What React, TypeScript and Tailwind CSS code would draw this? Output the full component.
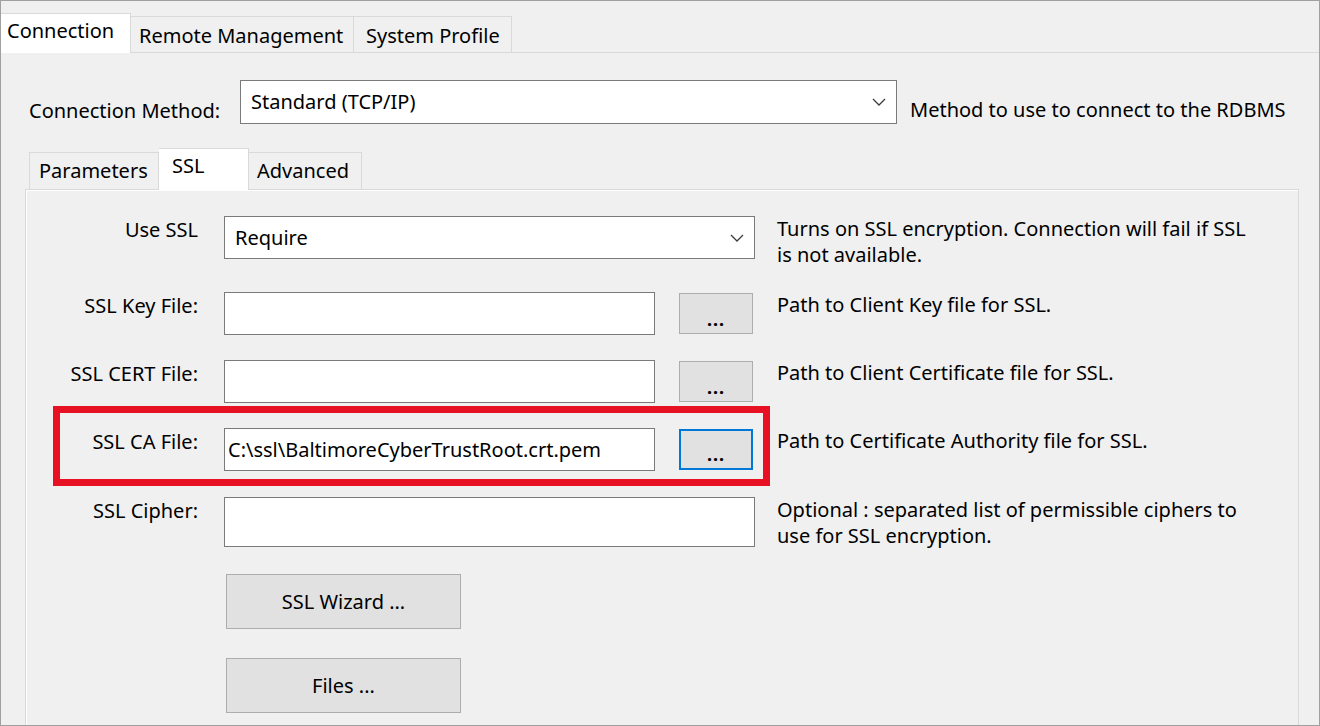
import React from "react";

const font = { fontFamily: '"Noto Sans", "Segoe UI", sans-serif' };

function Chevron() {
  return (
    <svg width="14" height="8" viewBox="0 0 14 8" className="text-[#3c3c3c]">
      <polyline points="1,1 7,7 13,1" fill="none" stroke="currentColor" strokeWidth="1.3" />
    </svg>
  );
}

function Combo({ value, className }: { value: string; className: string }) {
  return (
    <div
      className={`flex items-center justify-between border border-[#7a7a7a] bg-white pl-[10px] pr-[10px] ${className}`}
    >
      <span>{value}</span>
      <Chevron />
    </div>
  );
}

function TextBox({ value }: { value?: string }) {
  return (
    <div className="flex h-[43px] w-[431px] items-center border border-[#7a7a7a] bg-white pl-[3px]">
      {value}
    </div>
  );
}

function DotsButton({ active }: { active?: boolean }) {
  return (
    <div
      className={`ml-[24px] mt-[1px] flex h-[41px] w-[74px] items-end justify-center bg-[#e1e1e1] pb-[5px] text-[18px] font-bold leading-none tracking-[1px] ${
        active ? "border-2 border-[#0078d7]" : "border border-[#adadad]"
      }`}
    >
      ...
    </div>
  );
}

function Row({
  label,
  children,
  desc,
  className = "",
}: {
  label: string;
  children: React.ReactNode;
  desc?: React.ReactNode;
  className?: string;
}) {
  return (
    <div className={`flex items-start ${className}`}>
      <div className="w-[172px] pt-[1px] text-right leading-[26px]">{label}</div>
      <div className="ml-[26px] flex w-[531px] items-start">{children}</div>
      {desc && <div className="ml-[22px] leading-[26px]">{desc}</div>}
    </div>
  );
}

export default function App() {
  return (
    <div
      className="flex h-[726px] w-[1320px] flex-col overflow-hidden border border-[#a0a0a0] bg-[#f0f0f0] text-[20px] text-black"
      style={font}
    >
      {/* Outer tabs */}
      <div className="flex h-[51px] items-end">
        <div className="relative z-10 -mb-px flex h-[40px] w-[130px] items-start border-r border-t border-[#d9d9d9] bg-white pl-[6px] pt-[2px]">
          Connection
        </div>
        <div className="flex h-[36px] w-[223px] items-start border-r border-t border-[#d9d9d9] pl-[8px] pt-[4px]">
          Remote Management
        </div>
        <div className="flex h-[36px] w-[158px] items-start border-r border-t border-[#d9d9d9] pl-[12px] pt-[4px]">
          System Profile
        </div>
      </div>

      {/* Outer panel */}
      <div className="flex flex-1 flex-col border-t border-[#d9d9d9] bg-[#f0f0f0] pr-[20px]">
        <div className="flex h-[71px] items-start pl-[28px] pt-[27px]">
          <div className="w-[211px] pt-[16px]">Connection Method:</div>
          <Combo value="Standard (TCP/IP)" className="h-[44px] w-[657px]" />
          <div className="ml-[13px] pt-[15px]">Method to use to connect to the RDBMS</div>
        </div>

        {/* Inner tabs */}
        <div className="mt-[24px] flex items-end pl-[28px]">
          <div className="flex h-[37px] w-[130px] items-start border-l border-r border-t border-[#d9d9d9] pl-[9px] pt-[3px]">
            Parameters
          </div>
          <div className="relative z-10 -mb-px flex h-[42px] w-[90px] items-start border-r border-t border-[#d9d9d9] bg-white pl-[13px] pt-[2px]">
            SSL
          </div>
          <div className="flex h-[37px] w-[113px] items-start border-r border-t border-[#d9d9d9] pl-[8px] pt-[3px]">
            Advanced
          </div>
        </div>

        {/* Inner panel */}
        <div className="ml-[24px] flex flex-1 flex-col border-l border-r border-t border-[#d9d9d9] bg-[#f0f0f0] pt-[26px] shadow-[inset_1px_1px_0_#ffffff]">
          <Row
            label="Use SSL"
            className="h-[43px]"
            desc={
              <>
                Turns on SSL encryption. Connection will fail if SSL
                <br />
                is not available.
              </>
            }
          >
            <Combo value="Require" className="h-[43px] w-[531px]" />
          </Row>

          <Row label="SSL Key File:" className="mt-[33px] h-[43px]" desc="Path to Client Key file for SSL.">
            <TextBox />
            <DotsButton />
          </Row>

          <Row label="SSL CERT File:" className="mt-[25px] h-[43px]" desc="Path to Client Certificate file for SSL.">
            <TextBox />
            <DotsButton />
          </Row>

          <div className="relative mt-[25px] h-[43px]">
            <Row label="SSL CA File:" desc="Path to Certificate Authority file for SSL.">
              <TextBox value="C:\ssl\BaltimoreCyberTrustRoot.crt.pem" />
              <DotsButton active />
            </Row>
            {/* highlight annotation */}
            <div className="pointer-events-none absolute left-[27px] top-[-22px] h-[80px] w-[717px] border-[7px] border-[#e81123]" />
          </div>

          <Row
            label="SSL Cipher:"
            className="mt-[26px] h-[50px]"
            desc={
              <>
                Optional : separated list of permissible ciphers to
                <br />
                use for SSL encryption.
              </>
            }
          >
            <div className="h-[50px] w-[531px] border border-[#7a7a7a] bg-white" />
          </Row>

          <div className="ml-[200px] mt-[27px] flex h-[55px] w-[235px] shrink-0 items-center justify-center border border-[#adadad] bg-[#e1e1e1]">
            SSL Wizard ...
          </div>
          <div className="ml-[200px] mt-[29px] flex h-[55px] w-[235px] shrink-0 items-center justify-center border border-[#adadad] bg-[#e1e1e1]">
            Files ...
          </div>
        </div>
      </div>
    </div>
  );
}
